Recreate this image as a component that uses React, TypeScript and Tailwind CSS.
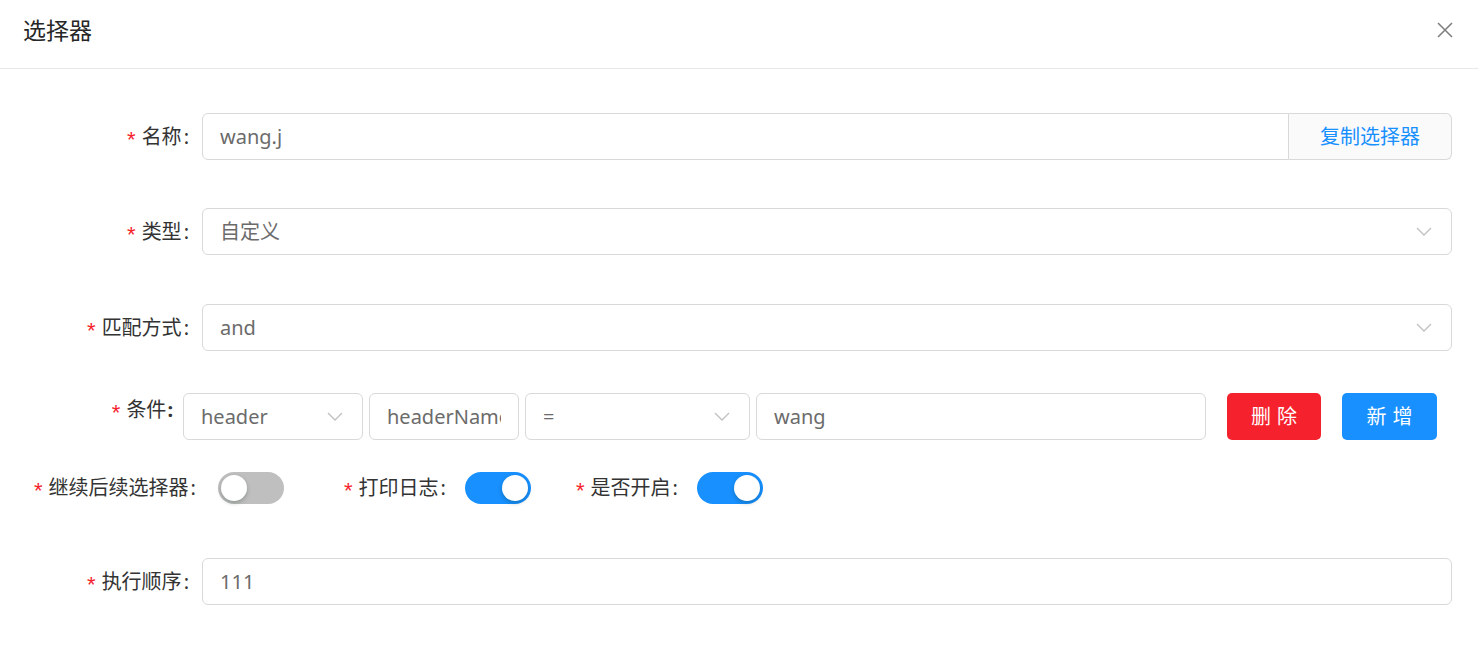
const font = { fontFamily: '"Noto Sans", "Noto Sans CJK SC", sans-serif' };

function Star() {
  return (
    <span className="mr-[6px] pt-[6px] font-['Liberation_Sans',sans-serif] text-[22px] leading-none text-[#f5222d]">
      *
    </span>
  );
}

function Chevron() {
  return (
    <svg width="16" height="9" viewBox="0 0 16 9" fill="none" className="shrink-0">
      <path d="M1 1l7 7 7-7" stroke="#bfbfbf" strokeWidth="1.3" />
    </svg>
  );
}

function Label({ text, width = 202 }: { text: string; width?: number }) {
  return (
    <div className="flex shrink-0 items-center justify-end pr-[13px] text-[20px] text-[#333]" style={{ width }}>
      <Star />
      <span>{text}</span>
      <span className="ml-[2px]">:</span>
    </div>
  );
}

function Select({ value, className = "" }: { value: string; className?: string }) {
  return (
    <div className={`flex h-[47px] items-center justify-between rounded-[6px] border border-[#d9d9d9] bg-white pl-[17px] pr-[19px] ${className}`}>
      <span className="text-[20px] text-[#6b6b6b]">{value}</span>
      <Chevron />
    </div>
  );
}

function Input({ value, className = "" }: { value: string; className?: string }) {
  return (
    <div className={`flex h-[47px] items-center overflow-hidden whitespace-nowrap rounded-[6px] border border-[#d9d9d9] bg-white px-[17px] ${className}`}>
      <span className="overflow-hidden text-[20px] text-[#6b6b6b]">{value}</span>
    </div>
  );
}

function Switch({ on, label, width }: { on: boolean; label: string; width: number }) {
  return (
    <div className="flex items-center">
      <div className="flex items-center text-[20px] text-[#333]" style={{ width }}>
        <Star />
        <span>{label}</span>
        <span className="ml-[2px]">:</span>
      </div>
      <div className={`flex h-[32px] w-[66px] items-center rounded-full px-[3px] ${on ? "justify-end bg-[#1890ff]" : "justify-start bg-[#bfbfbf]"}`}>
        <div className="h-[26px] w-[26px] rounded-full bg-white shadow-[0_2px_4px_rgba(0,35,11,0.25)]" />
      </div>
    </div>
  );
}

export default function App() {
  return (
    <div className="h-[663px] w-[1478px] bg-white" style={font}>
      {/* Header */}
      <div className="flex h-[69px] items-center justify-between border-b border-[#e8e8e8] pl-[23px] pr-[25px]">
        <span className="pb-[8px] text-[23px] text-[#262626]">选择器</span>
        <svg width="16" height="16" viewBox="0 0 16 16" className="mb-[8px]">
          <path d="M1 1l14 14M15 1L1 15" stroke="#808080" strokeWidth="1.6" />
        </svg>
      </div>

      <div className="pr-[26px] pt-[44px]">
        {/* 名称 */}
        <div className="mb-[48px] flex h-[47px] items-center">
          <Label text="名称" />
          <div className="flex flex-1">
            <Input value="wang.j" className="flex-1 rounded-r-none" />
            <div className="flex h-[47px] w-[163px] items-center justify-center rounded-r-[6px] border border-l-0 border-[#d9d9d9] bg-[#fafafa] text-[20px] text-[#1890ff]">
              复制选择器
            </div>
          </div>
        </div>

        {/* 类型 */}
        <div className="mb-[49px] flex h-[47px] items-center">
          <Label text="类型" />
          <Select value="自定义" className="flex-1" />
        </div>

        {/* 匹配方式 */}
        <div className="mb-[42px] flex h-[47px] items-center">
          <Label text="匹配方式" />
          <Select value="and" className="flex-1" />
        </div>

        {/* 条件 */}
        <div className="mb-[32px] flex h-[47px] items-start">
          <div className="flex w-[183px] shrink-0 items-center justify-end pr-[10px] pt-[2px] text-[20px] text-[#333]">
            <Star />
            <span>条件</span>
            <span className="ml-[1px] font-bold">:</span>
          </div>
          <div className="flex items-center gap-[6px]">
            <Select value="header" className="w-[180px]" />
            <Input value="headerName" className="w-[150px]" />
            <Select value="=" className="w-[225px]" />
            <Input value="wang" className="w-[450px]" />
          </div>
          <button className="ml-[21px] h-[47px] w-[94px] rounded-[5px] bg-[#f5222d] pl-[6px] text-[20px] tracking-[6px] text-white">
            删除
          </button>
          <button className="ml-[21px] h-[47px] w-[95px] rounded-[5px] bg-[#1890ff] pl-[6px] text-[20px] tracking-[6px] text-white">
            新增
          </button>
        </div>

        {/* switches */}
        <div className="mb-[54px] flex h-[32px] items-center pl-[34px]">
          <Switch on={false} label="继续后续选择器" width={184} />
          <div className="w-[60px]" />
          <Switch on label="打印日志" width={121} />
          <div className="w-[45px]" />
          <Switch on label="是否开启" width={121} />
        </div>

        {/* 执行顺序 */}
        <div className="flex h-[47px] items-center">
          <Label text="执行顺序" />
          <Input value="111" className="flex-1" />
        </div>
      </div>
    </div>
  );
}
